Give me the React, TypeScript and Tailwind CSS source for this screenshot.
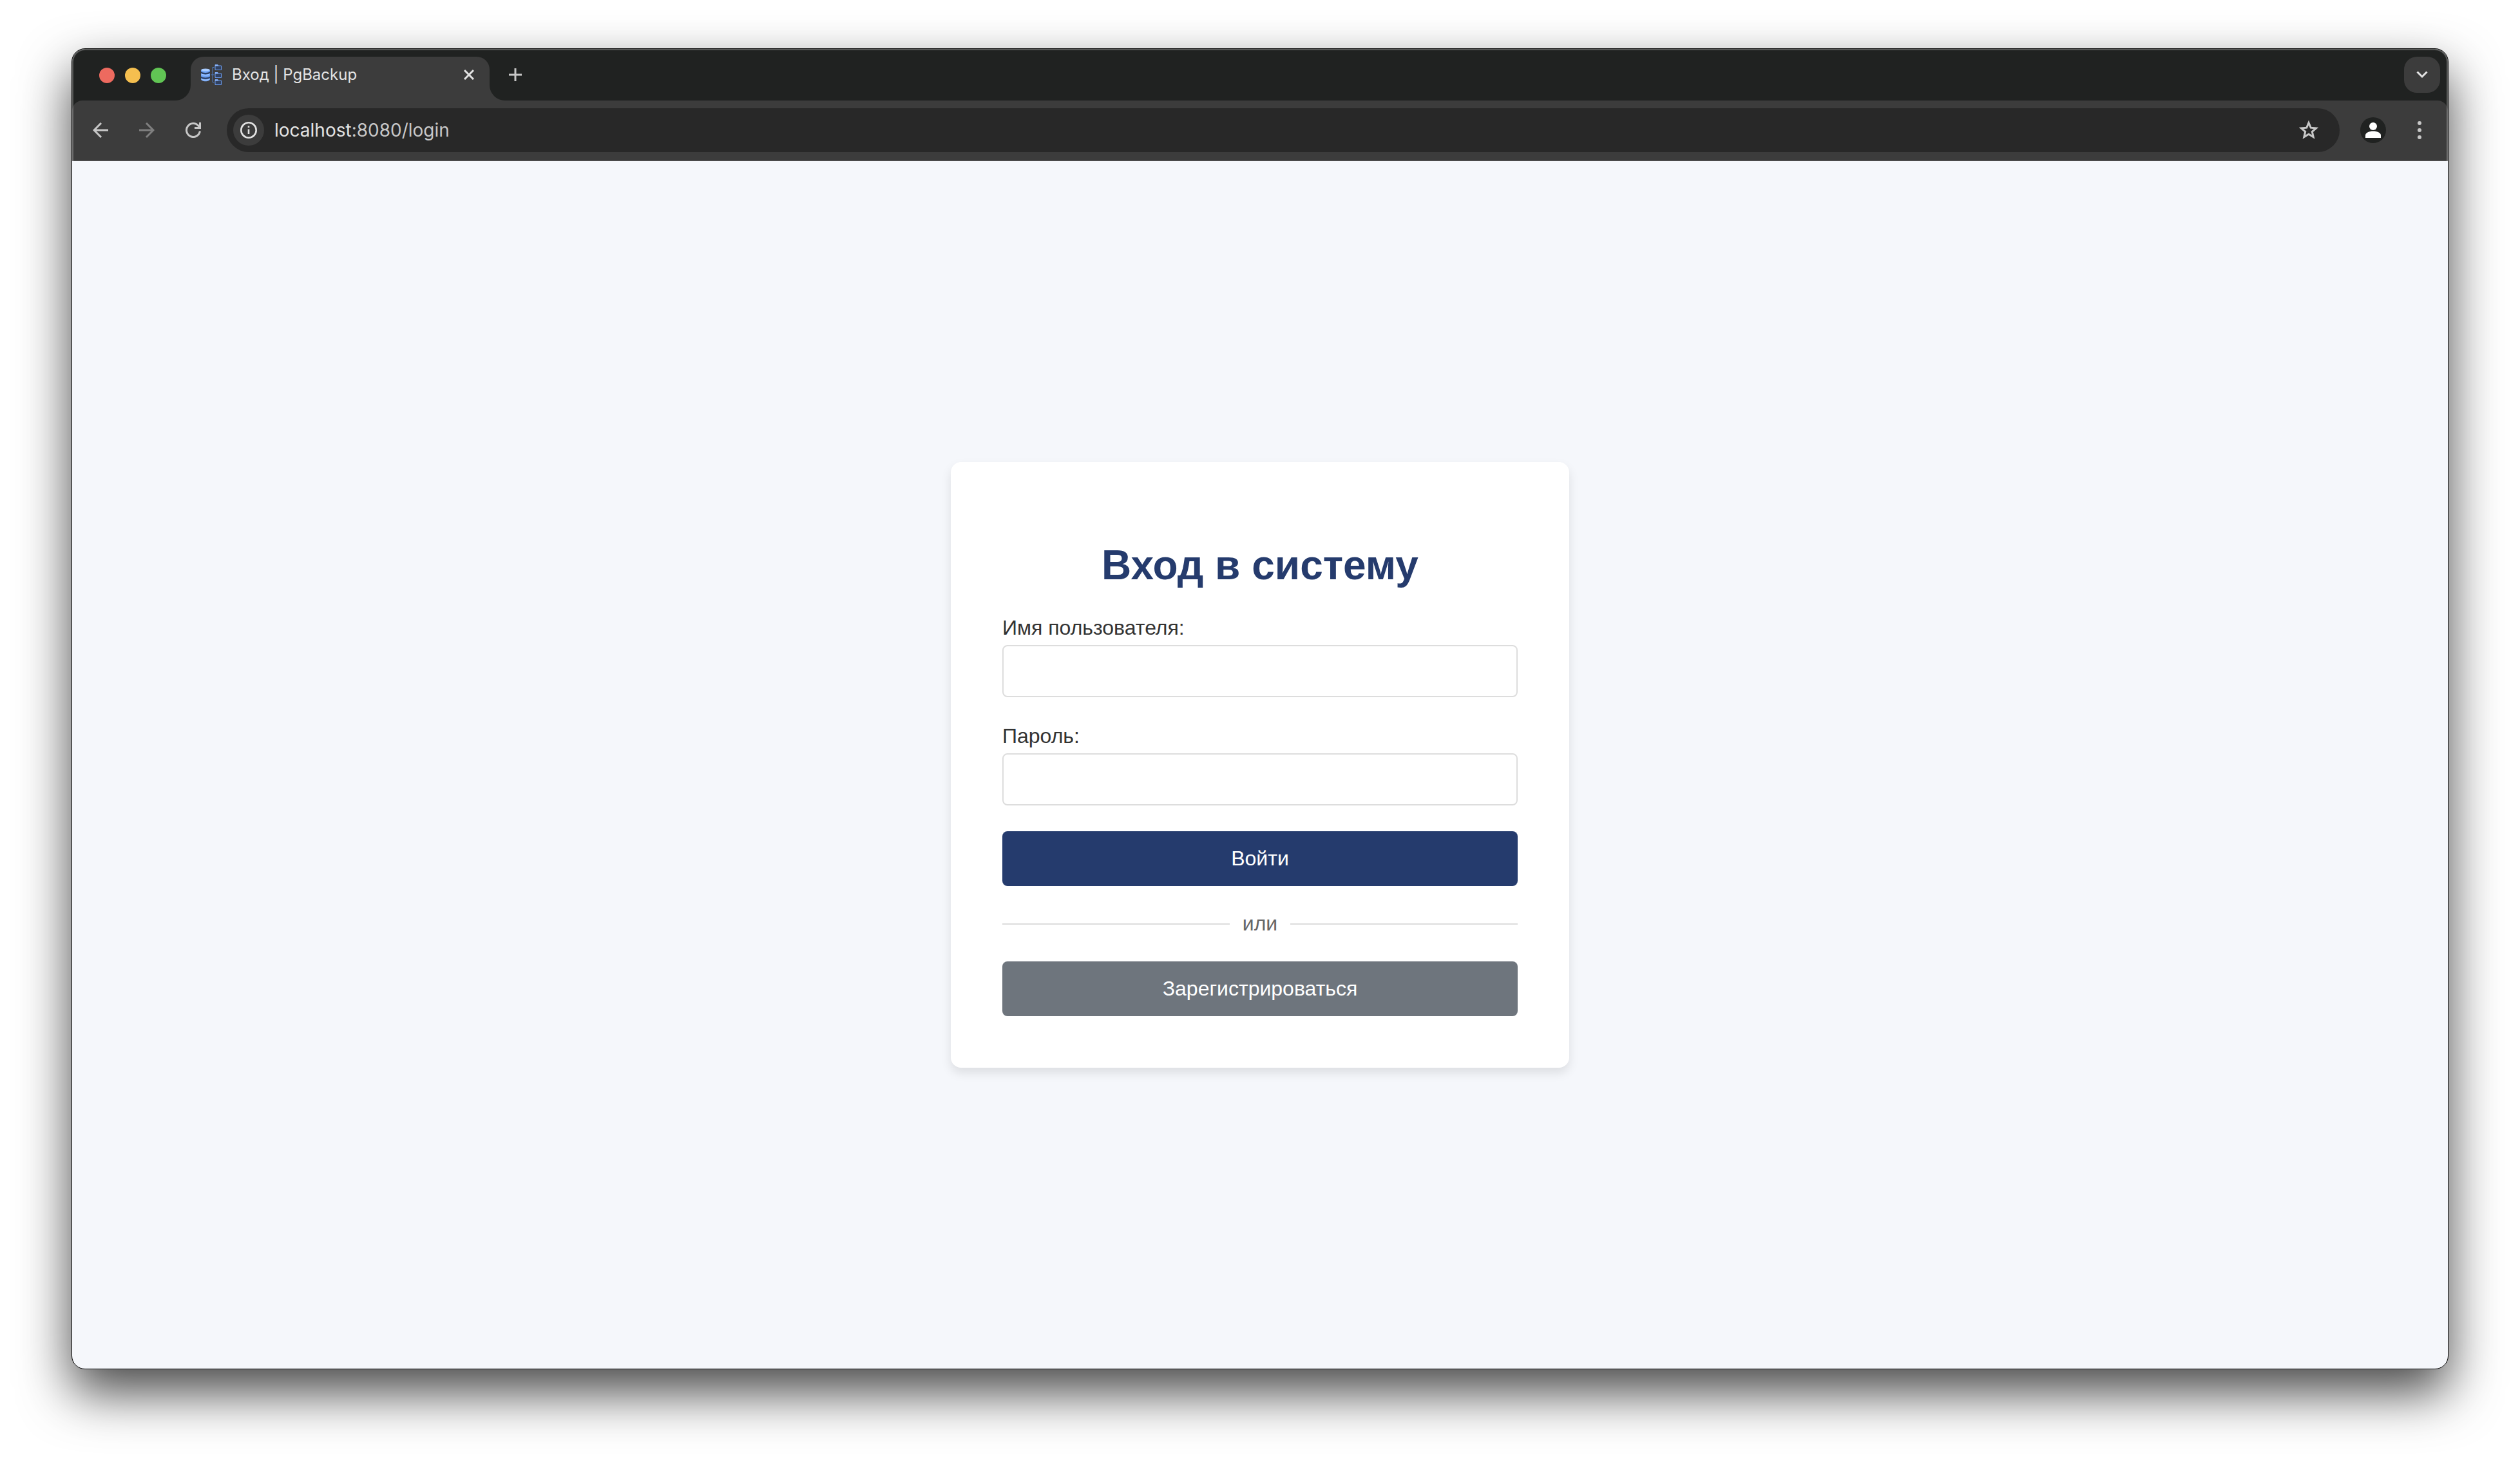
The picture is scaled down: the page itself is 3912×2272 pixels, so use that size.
import React from "react";

function Favicon() {
  return (
    <svg viewBox="0 0 32 32" className="size-8 shrink-0" aria-hidden="true">
      <path d="M0 8v14.500c0 5 14 5 14 0V8z" fill="#6ea2f5" />
      <ellipse cx="7" cy="8.500" rx="6.500" ry="2" fill="#a9ccff" />
      <path d="M0 11c2.500 2.600 11.500 2.600 14 0v2.500c-2.500 2.600-11.500 2.600-14 0z" fill="#2c4066" />
      <path d="M0 18.500c2.500 2.600 11.500 2.600 14 0V21c-2.500 2.600-11.500 2.600-14 0z" fill="#2c4066" />
      <path d="M1 15.500c3 1.600 9 1.600 12 0M1 23c3 1.600 9 1.600 12 0" fill="none" stroke="#9cc3ff" strokeWidth="1.500" />
      <path d="M20.500 4.500h-2.500v23h2.500M15.500 16h5" fill="none" stroke="#4f7cc4" strokeWidth="1" />
      {[0, 12, 23].map((y) => (
        <g key={y} transform={`translate(0 ${y})`}>
          <path d="M22 0.500h4l1.500 1.500H31.500V8.500H22z" fill="#31415f" stroke="#6b9cf0" strokeWidth="1" />
          <path d="M22 0.500h4l1.500 2H22z" fill="#8fbaff" />
        </g>
      ))}
    </svg>
  );
}

function TabStrip() {
  return (
    <div className="flex items-start bg-[#202221] pt-3 pl-[42px] pr-3">
      <div className="flex h-[58px] items-center gap-4" aria-label="Window controls">
        <button aria-label="Close window" className="size-6 rounded-full bg-[#ed6a5f]" />
        <button aria-label="Minimize window" className="size-6 rounded-full bg-[#f5bf4f]" />
        <button aria-label="Zoom window" className="size-6 rounded-full bg-[#61c554]" />
      </div>
      <div className="relative ml-[38px] flex h-[68px] w-[464px] items-start rounded-t-[20px] bg-[#3c3c3c] px-4 pt-3">
        <span className="absolute bottom-0 -left-6 size-6 bg-[#3c3c3c]">
          <span className="block size-6 rounded-br-[24px] bg-[#202221]" />
        </span>
        <span className="absolute bottom-0 -right-6 size-6 bg-[#3c3c3c]">
          <span className="block size-6 rounded-bl-[24px] bg-[#202221]" />
        </span>
        <Favicon />
        <span className="ml-4 flex-1 text-2xl leading-8 whitespace-nowrap text-[#e3e3e3]">Вход | PgBackup</span>
        <button aria-label="Close tab" className="flex size-8 items-center justify-center">
          <svg viewBox="0 0 16 16" className="size-4" fill="none" stroke="#e3e3e3" strokeWidth="3">
            <path d="M1 1l14 14M15 1L1 15" />
          </svg>
        </button>
      </div>
      <button aria-label="New tab" className="ml-3 flex size-14 items-center justify-center">
        <svg viewBox="0 0 20 20" className="size-5" fill="none" stroke="#c7c7c7" strokeWidth="3">
          <path d="M10 0v20M0 10h20" />
        </svg>
      </button>
      <button
        aria-label="Search tabs"
        className="ml-auto flex size-14 items-center justify-center rounded-[20px] bg-[#3c3c3c]"
      >
        <svg viewBox="0 0 18 12" className="h-3 w-[18px]" fill="none" stroke="#e3e3e3" strokeWidth="3">
          <path d="M1.500 1.500L9 9l7.500-7.500" />
        </svg>
      </button>
    </div>
  );
}

function Toolbar() {
  return (
    <div className="bg-[#202221]">
      <div className="flex items-center rounded-t-[16px] border-b-2 border-[#4a4a4a] bg-[#3c3c3c] py-3 pr-5 pl-4">
        <button aria-label="Back" className="flex size-14 items-center justify-center">
          <svg viewBox="0 0 24 24" className="size-6" fill="none" stroke="#c7c7c7" strokeWidth="3">
            <path d="M24 12H2M13 1L2 12l11 11" />
          </svg>
        </button>
        <button aria-label="Forward" disabled className="ml-4 flex size-14 items-center justify-center">
          <svg viewBox="0 0 24 24" className="size-6" fill="none" stroke="#7f7f7f" strokeWidth="3">
            <path d="M0 12h22M11 1l11 11-11 11" />
          </svg>
        </button>
        <button aria-label="Reload" className="ml-4 flex size-14 items-center justify-center">
          <svg viewBox="0 0 24 24" className="size-6" fill="none" stroke="#c7c7c7" strokeWidth="3">
            <path d="M22.400 13.500A10.500 10.500 0 1 1 20 5.200L22 8" />
            <path d="M22.500 0v8.500H14" />
          </svg>
        </button>
        <div className="ml-6 flex h-[68px] flex-1 items-center rounded-full bg-[#282828] pr-8 pl-[10px]">
          <button
            aria-label="View site information"
            className="flex size-12 items-center justify-center rounded-full bg-[#3c3c3c]"
          >
            <svg viewBox="0 0 26 26" className="size-[26px]" fill="none" stroke="#e3e3e3">
              <circle cx="13" cy="13" r="11.700" strokeWidth="2.600" />
              <path d="M13 11.500V19M13 6.500V9" strokeWidth="2.600" />
            </svg>
          </button>
          <div className="ml-4 flex-1 text-[28px] leading-9 whitespace-nowrap">
            <a href="#login" className="text-[#c7c7c7]">
              <span className="text-[#e3e3e3]">localhost</span>:8080/login
            </a>
          </div>
          <button aria-label="Bookmark this tab">
            <svg viewBox="0 0 32 32" className="size-8" fill="none" stroke="#c7c7c7" strokeWidth="3">
              <path d="M16 4.500l3.200 7.700 8.400.7-6.300 5.500 1.900 8.200L16 22.300l-7.200 4.300 1.900-8.200-6.300-5.500 8.400-.7z" />
            </svg>
          </button>
        </div>
        <button aria-label="Profile" className="ml-8 flex size-10 items-center justify-center rounded-full bg-[#202221]">
          <svg viewBox="0 0 24 24" className="size-6" fill="#fff">
            <circle cx="12" cy="6" r="6" />
            <path d="M0 24v-4c0-4 6-6.500 12-6.500s12 2.500 12 6.500v4z" />
          </svg>
        </button>
        <button aria-label="Menu" className="ml-7 flex h-14 w-12 items-center justify-center">
          <svg viewBox="0 0 6 28" className="h-7 w-[6px]" fill="#c7c7c7">
            <circle cx="3" cy="3" r="3" />
            <circle cx="3" cy="14" r="3" />
            <circle cx="3" cy="25" r="3" />
          </svg>
        </button>
      </div>
    </div>
  );
}

const inputClass =
  "h-[81px] w-full rounded-lg border-2 border-[#dddddd] bg-white px-4 text-[32px] outline-none";

function LoginCard() {
  return (
    <form
      onSubmit={(e) => e.preventDefault()}
      className="flex w-[960px] flex-col rounded-2xl bg-white p-20 text-[32px] leading-[37px] text-[#333333] shadow-[0_8px_16px_rgba(0,0,0,0.1)]"
    >
      <h1 className="mt-[43px] mb-[42px] text-center text-[64px] leading-[74px] font-bold text-[#253b6d]">
        Вход в систему
      </h1>
      <label htmlFor="username" className="mb-2">
        Имя пользователя:
      </label>
      <input id="username" type="text" className={inputClass} />
      <label htmlFor="password" className="mt-[42px] mb-2">
        Пароль:
      </label>
      <input id="password" type="password" className={inputClass} />
      <button type="submit" className="mt-10 h-[85px] rounded-lg bg-[#253b6d] text-white">
        Войти
      </button>
      <div className="my-10 flex items-center gap-5 text-[#666666]">
        <span className="h-[2px] flex-1 bg-[#dddddd]" />
        <span>или</span>
        <span className="h-[2px] flex-1 bg-[#dddddd]" />
      </div>
      <button type="button" className="h-[85px] rounded-lg bg-[#6e757d] text-white">
        Зарегистрироваться
      </button>
    </form>
  );
}

export default function App() {
  return (
    <div className="flex min-h-screen flex-col bg-white px-[111px] pt-[75px] pb-[147px]">
      <div className="flex flex-1 flex-col overflow-hidden rounded-[21px] border border-black bg-[#f5f7fb] shadow-[0_36px_80px_rgba(0,0,0,0.72)]">
        <header className="relative font-[Inter,sans-serif] after:pointer-events-none after:absolute after:inset-0 after:rounded-t-[20px] after:border-2 after:border-b-0 after:border-white/25">
          <TabStrip />
          <Toolbar />
        </header>
        <main className="flex flex-1 items-center justify-center font-['Liberation_Sans',sans-serif]">
          <LoginCard />
        </main>
      </div>
    </div>
  );
}
